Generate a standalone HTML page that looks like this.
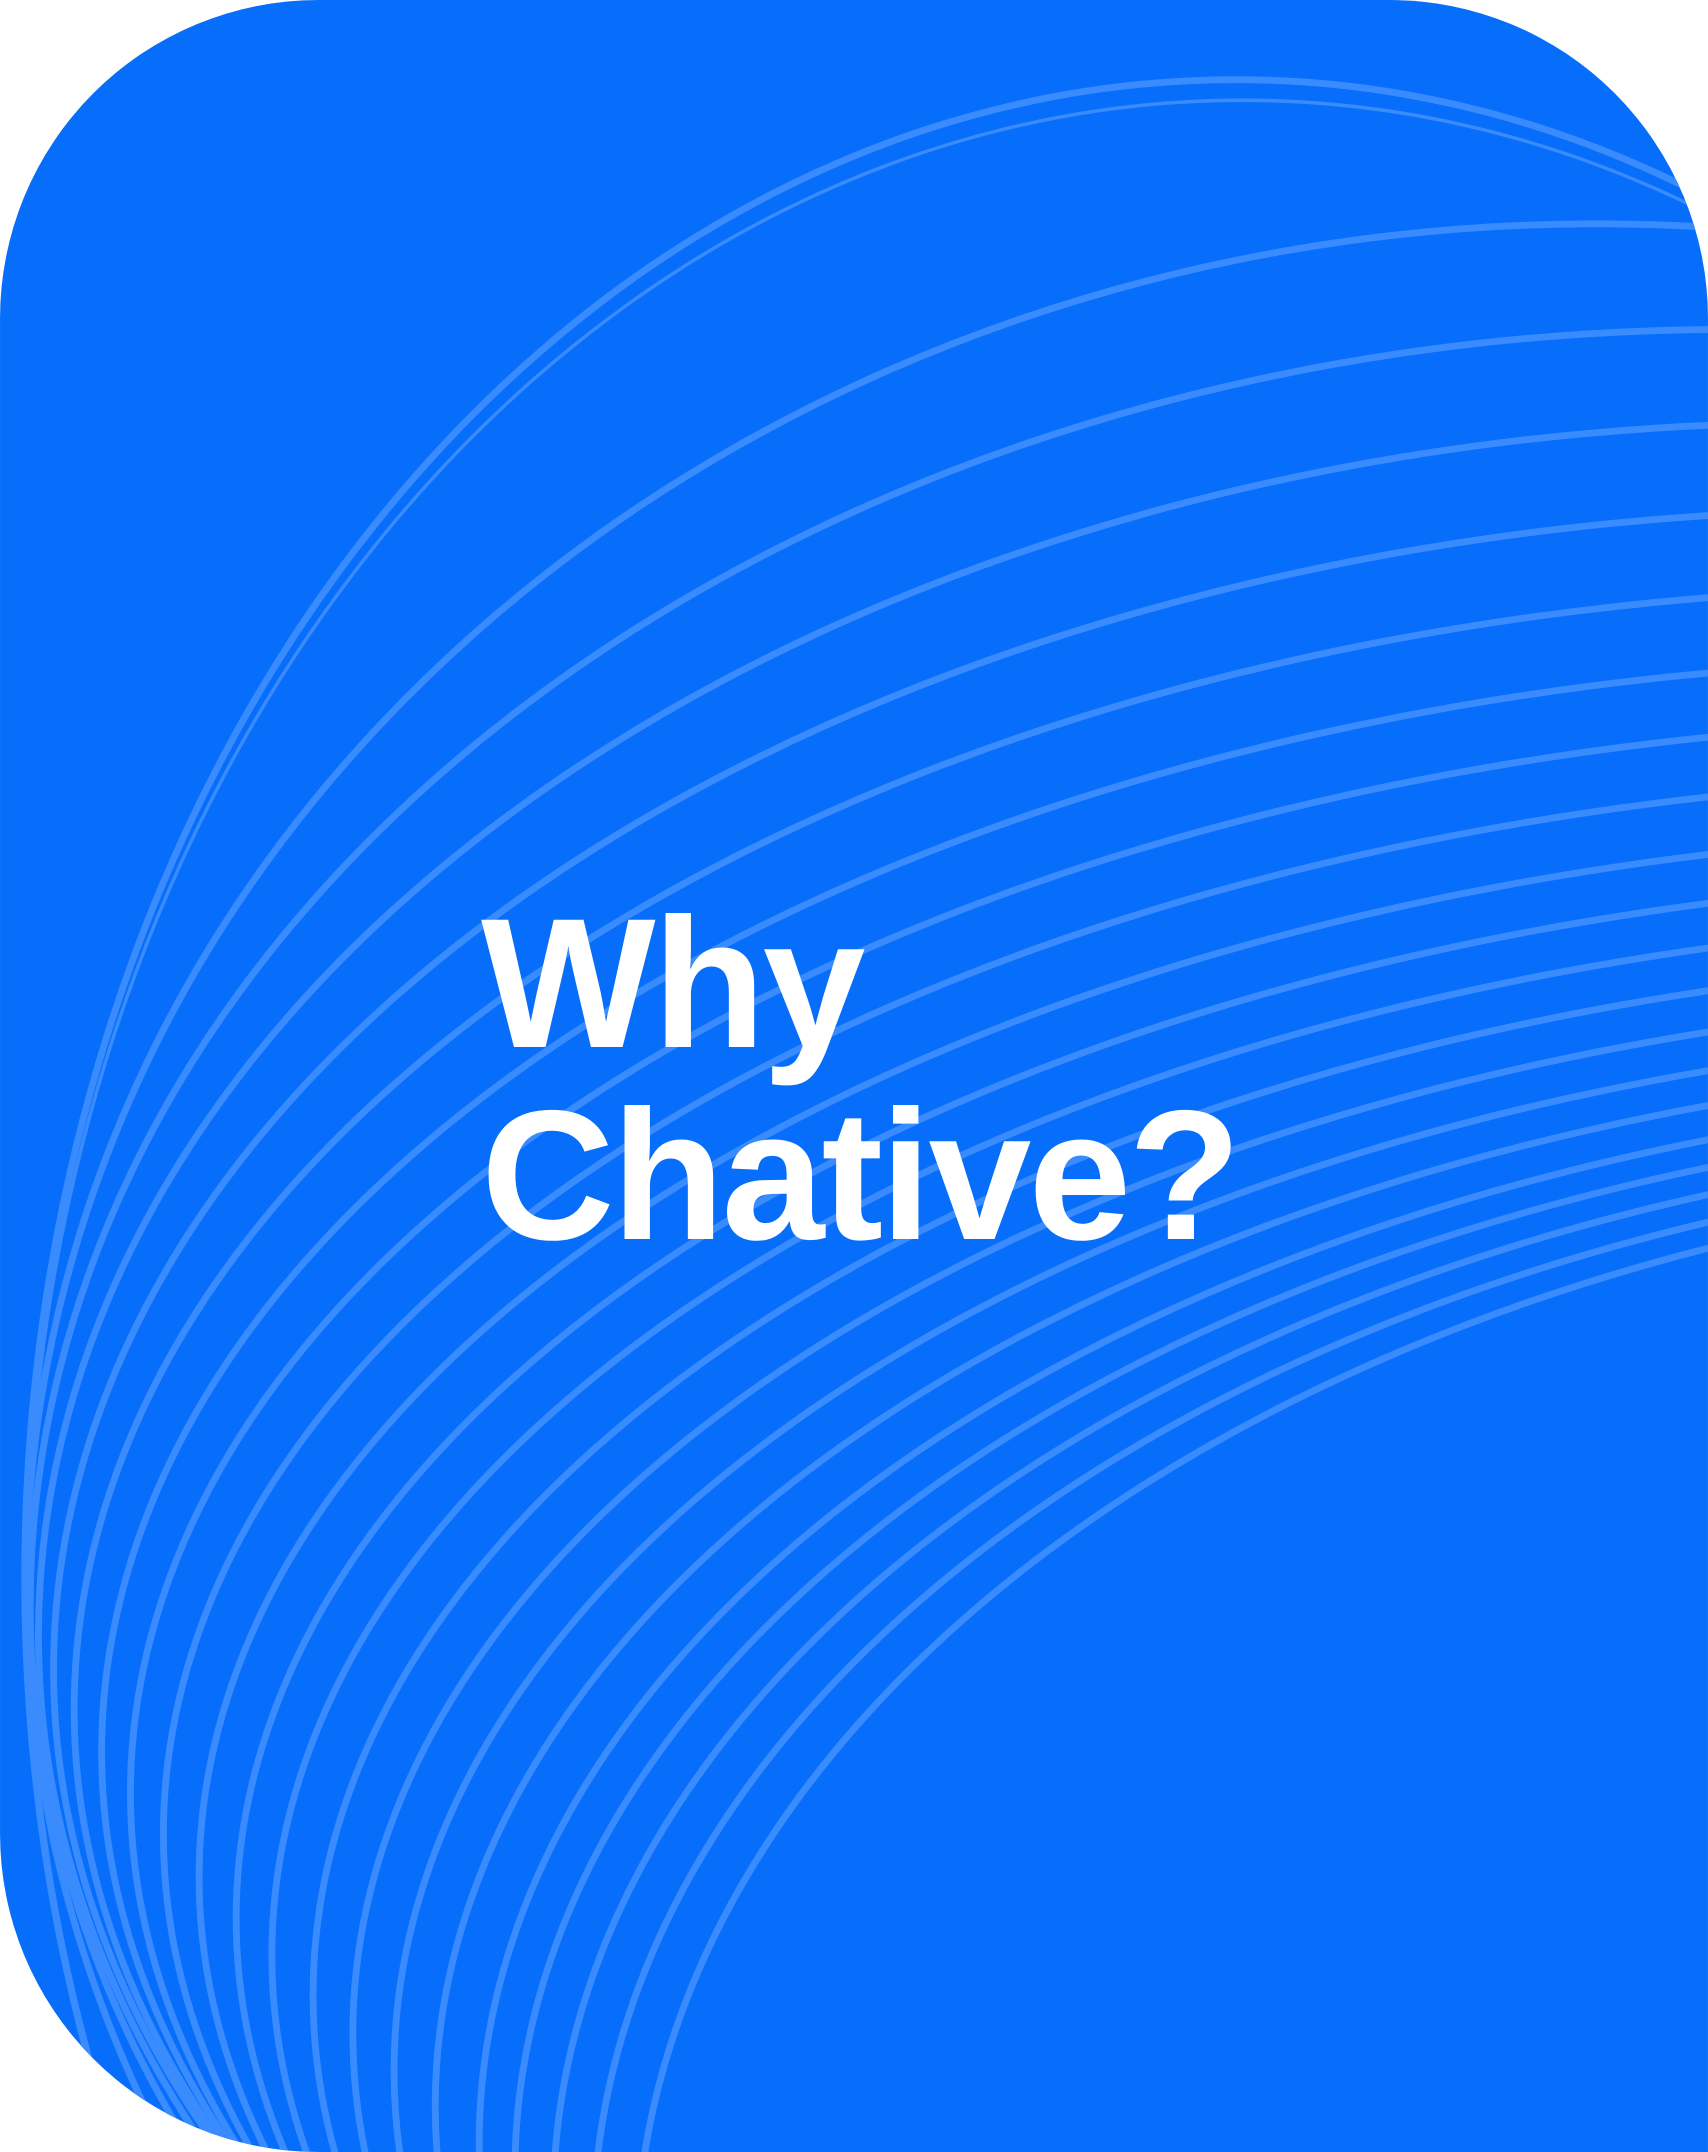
<!DOCTYPE html>
<html><head><meta charset="utf-8"><style>
html,body{margin:0;padding:0;background:#fff;width:1708px;height:2152px;overflow:hidden;}
body{position:relative;}
svg{position:absolute;left:0;top:0;display:block;}
.t{position:absolute;left:481px;top:888px;font-family:"Liberation Sans",sans-serif;font-weight:bold;font-size:185px;line-height:192px;color:#fff;letter-spacing:-3px;}
</style></head><body>
<svg width="1708" height="2152" viewBox="0 0 1244 1567.4">
<defs><clipPath id="c"><path d="M232 0 H1012 A232 232 0 0 1 1244 232 V1567.4 H232 A232 232 0 0 1 0 1335.4 V232 A232 232 0 0 1 232 0 Z"/></clipPath></defs>
<g clip-path="url(#c)">
<rect width="1244" height="1567.4" fill="#066EFA"/>
<g fill="none" stroke="#3A8BFD" stroke-width="5">
<ellipse cx="900" cy="1150" rx="882" ry="1092"/>
<ellipse cx="905" cy="1155" rx="885" ry="1082" stroke-width="2.5"/>
<ellipse cx="1163" cy="1156" rx="1144" ry="993"/>
<ellipse cx="1258" cy="1170" rx="1236" ry="930"/>
<ellipse cx="1327" cy="1191" rx="1299" ry="883"/>
<ellipse cx="1382" cy="1216" rx="1343" ry="845"/>
<ellipse cx="1428" cy="1245" rx="1374" ry="817"/>
<ellipse cx="1466" cy="1276" rx="1392" ry="796"/>
<ellipse cx="1498" cy="1306" rx="1403" ry="782"/>
<ellipse cx="1524" cy="1336" rx="1405" ry="771"/>
<ellipse cx="1550" cy="1367" rx="1405" ry="763"/>
<ellipse cx="1570" cy="1397" rx="1398" ry="760"/>
<ellipse cx="1588" cy="1424" rx="1390" ry="757"/>
<ellipse cx="1606" cy="1453" rx="1378" ry="758"/>
<ellipse cx="1622" cy="1481" rx="1365" ry="759"/>
<ellipse cx="1636" cy="1508" rx="1349" ry="761"/>
<ellipse cx="1649" cy="1534" rx="1332" ry="765"/>
<ellipse cx="1662" cy="1561" rx="1313" ry="771"/>
<ellipse cx="1671" cy="1582" rx="1296" ry="775"/>
<ellipse cx="1681" cy="1604" rx="1278" ry="781"/>
<ellipse cx="1690" cy="1627" rx="1258" ry="788"/>
<ellipse cx="1700" cy="1650" rx="1237" ry="797"/>
</g>
</g>
</svg>
<div class="t">Why<br>Chative?</div>
</body></html>
